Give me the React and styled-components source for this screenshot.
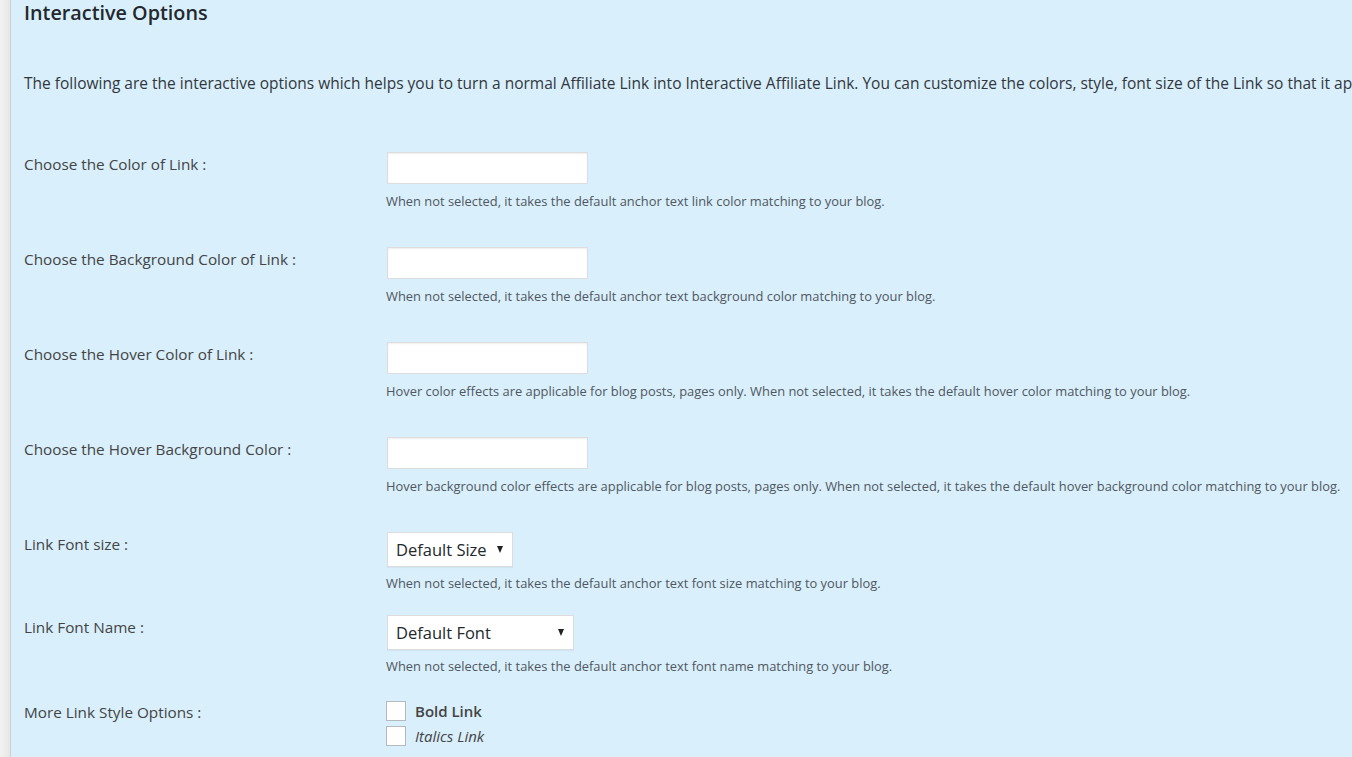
import React from "react";
import styled, { createGlobalStyle } from "styled-components";

const GlobalStyle = createGlobalStyle`
  html, body {
    margin: 0;
    padding: 0;
    overflow: hidden;
    background: #d9effc;
  }
`;

const Page = styled.div`
  display: flex;
  min-height: 757px;
  font-family: "Open Sans", "Noto Sans", sans-serif;
  color: #23282d;
`;

const Gutter = styled.div`
  width: 10px;
  flex: none;
  background: linear-gradient(to right, #f3f3f3, #e6e6e6);
  border-right: 1px solid #cfcfcf;
`;

const Main = styled.div`
  flex: 1;
  min-width: 0;
  padding-left: 13px;
  background: #d9effc;
  white-space: nowrap;
`;

const Heading = styled.h2`
  margin: 0;
  font-size: 19.8px;
  line-height: 25px;
  font-weight: 600;
  color: #23282d;
`;

const Intro = styled.p`
  margin: 48px 0 59px;
  font-size: 15.5px;
  line-height: 20px;
  color: #32373c;
`;

const Row = styled.div`
  display: grid;
  grid-template-columns: 362px 1fr;
  margin-bottom: ${p => p.gap || 37}px;
`;

const Label = styled.div`
  padding-top: 2px;
  font-size: 15.3px;
  line-height: 20px;
  color: #444;
`;

const Field = styled.div`
  display: flex;
  flex-direction: column;
  align-items: flex-start;
`;

const ColorInput = styled.input`
  box-sizing: border-box;
  width: 201px;
  height: 32px;
  margin: 0 0 0 1px;
  background: #fff;
  border: 1px solid #ddd;
  box-shadow: inset 0 1px 2px rgba(0, 0, 0, 0.07);
  outline: none;
`;

const Help = styled.div`
  margin-top: ${p => p.top || 8}px;
  font-size: 12.9px;
  line-height: 18px;
  color: #50575e;
`;

const SelectBox = styled.div`
  position: relative;
  box-sizing: border-box;
  width: ${p => p.width}px;
  height: 35px;
  margin-left: 1px;
  background: #fff;
  border: 1px solid #ddd;
  box-shadow: 0 1px 1px rgba(0, 0, 0, 0.04);
  display: flex;
  align-items: center;
  padding-left: 8px;
  font-size: 16.5px;
  color: #23282d;

  &::after {
    content: "";
    position: absolute;
    right: 9px;
    top: 13px;
    border-left: 3.5px solid transparent;
    border-right: 3.5px solid transparent;
    border-top: 7px solid #222;
  }
`;

const Checks = styled.div`
  display: flex;
  flex-direction: column;
  gap: 5px;
  padding-top: 1px;
`;

const CheckRow = styled.label`
  display: flex;
  align-items: center;
  gap: 9px;
  font-size: 15px;
  line-height: 20px;
  color: #444;
  font-weight: ${p => (p.bold ? 600 : 400)};
  font-style: ${p => (p.italic ? "italic" : "normal")};
`;

const Box = styled.span`
  box-sizing: border-box;
  width: 20px;
  height: 20px;
  background: #fff;
  border: 1px solid #b4b9be;
`;

const colorRows = [
  {
    label: "Choose the Color of Link :",
    help: "When not selected, it takes the default anchor text link color matching to your blog.",
  },
  {
    label: "Choose the Background Color of Link :",
    help: "When not selected, it takes the default anchor text background color matching to your blog.",
  },
  {
    label: "Choose the Hover Color of Link :",
    help: "Hover color effects are applicable for blog posts, pages only. When not selected, it takes the default hover color matching to your blog.",
  },
  {
    label: "Choose the Hover Background Color :",
    help: "Hover background color effects are applicable for blog posts, pages only. When not selected, it takes the default hover background color matching to your blog.",
  },
];

export default function App() {
  return (
    <Page>
      <GlobalStyle />
      <Gutter />
      <Main>
        <Heading>Interactive Options</Heading>
        <Intro>
          The following are the interactive options which helps you to turn a normal Affiliate Link into
          Interactive Affiliate Link. You can customize the colors, style, font size of the Link so that it
          appears attractive to your readers.
        </Intro>

        {colorRows.map(r => (
          <Row key={r.label}>
            <Label>{r.label}</Label>
            <Field>
              <ColorInput type="text" />
              <Help>{r.help}</Help>
            </Field>
          </Row>
        ))}

        <Row gap={23}>
          <Label>Link Font size :</Label>
          <Field>
            <SelectBox width={126}>Default Size</SelectBox>
            <Help top={7}>When not selected, it takes the default anchor text font size matching to your blog.</Help>
          </Field>
        </Row>

        <Row gap={25}>
          <Label>Link Font Name :</Label>
          <Field>
            <SelectBox width={187}>Default Font</SelectBox>
            <Help top={7}>When not selected, it takes the default anchor text font name matching to your blog.</Help>
          </Field>
        </Row>

        <Row>
          <Label>More Link Style Options :</Label>
          <Checks>
            <CheckRow bold>
              <Box />
              Bold Link
            </CheckRow>
            <CheckRow italic>
              <Box />
              Italics Link
            </CheckRow>
          </Checks>
        </Row>
      </Main>
    </Page>
  );
}
